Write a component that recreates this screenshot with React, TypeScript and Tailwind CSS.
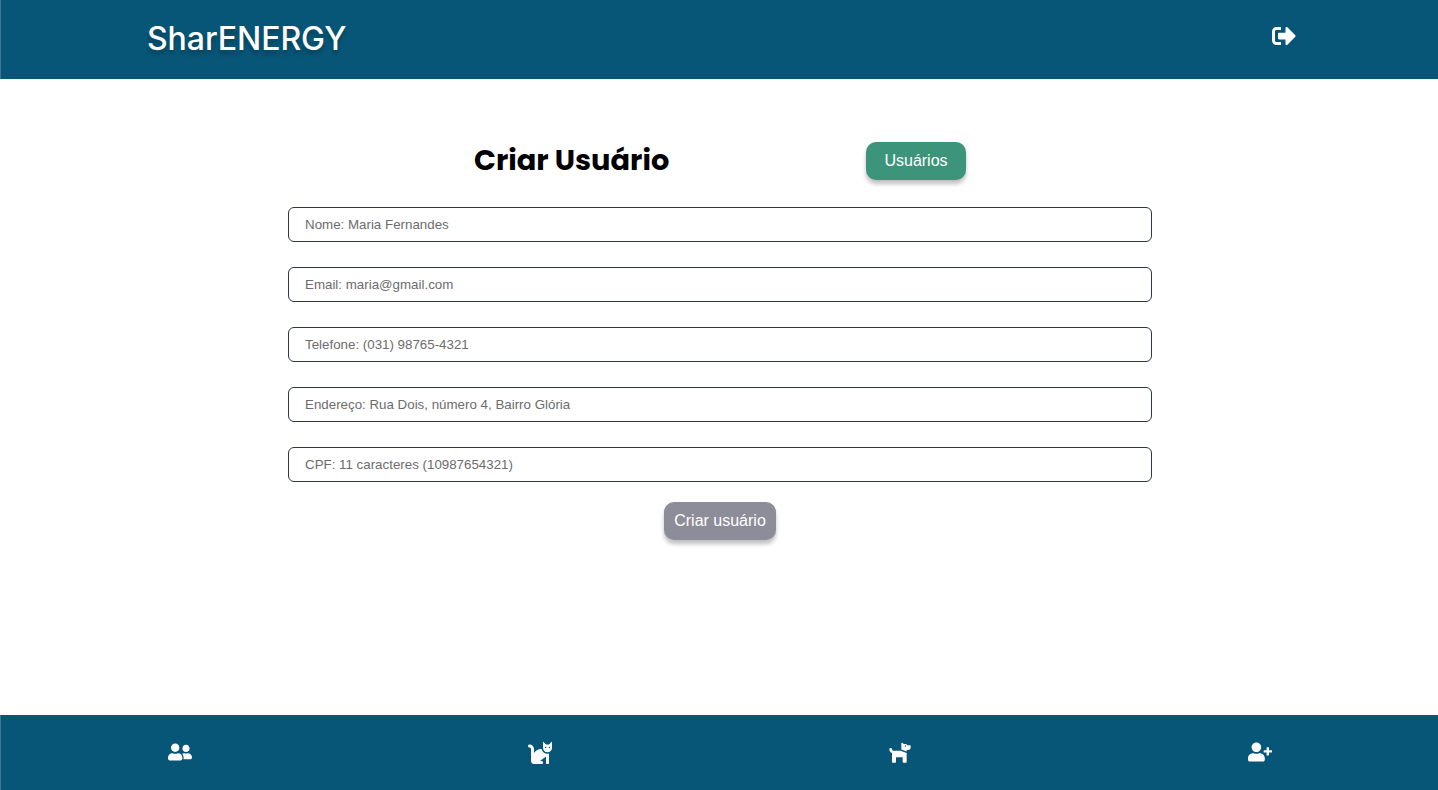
import { FaCat, FaDog, FaSignOutAlt, FaUserFriends, FaUserPlus } from "react-icons/fa";

const fields = [
  "Nome: Maria Fernandes",
  "Email: maria@gmail.com",
  "Telefone: (031) 98765-4321",
  "Endereço: Rua Dois, número 4, Bairro Glória",
  "CPF: 11 caracteres (10987654321)",
];

const links = [
  { label: "Usuários", Icon: FaUserFriends },
  { label: "Gatos", Icon: FaCat },
  { label: "Cachorros", Icon: FaDog },
  { label: "Criar usuário", Icon: FaUserPlus },
];

export default function App() {
  return (
    <div className="flex h-screen flex-col overflow-hidden bg-white font-['Liberation_Sans',Arial,sans-serif]">
      <header className="flex h-[79px] shrink-0 items-start justify-between border-l border-[#397893] bg-[#075678] pr-[142px] pl-[146px] text-white">
        <span className="mt-[15px] font-['Inter',sans-serif] text-[32px] leading-[48px] font-[450] tracking-[-0.05px] whitespace-nowrap [text-shadow:0_4px_4px_rgba(0,0,0,0.25)]">
          SharENERGY
        </span>
        <button aria-label="Sair" className="mt-6">
          <FaSignOutAlt size={24} />
        </button>
      </header>

      <main className="flex grow flex-col items-center pt-[63px]">
        <div className="flex h-[38px] w-[492px] translate-x-px items-start justify-between">
          <h1 className="-mt-[2px] font-['Poppins','Inter',sans-serif] text-[28.8px] leading-10 font-bold whitespace-nowrap text-black">
            Criar Usuário
          </h1>
          <button className="h-[38px] w-[100px] rounded-[10px] bg-[#3c957b] text-base text-white shadow-[0_4px_4px_rgba(0,0,0,0.25)]">
            Usuários
          </button>
        </div>
        <form className="mt-[27px] flex w-[864px] translate-x-px flex-col items-center">
          <div className="flex w-full flex-col gap-[25px]">
            {fields.map((placeholder) => (
              <input
                key={placeholder}
                placeholder={placeholder}
                className="h-[35px] w-full rounded-md border border-[#2d3748] bg-white px-4 text-[13.333px] placeholder:text-[#6c6c6c]"
              />
            ))}
          </div>
          <button
            type="button"
            className="mt-5 h-[38px] w-[112px] rounded-[10px] bg-[#8d8d99] text-base whitespace-nowrap text-white shadow-[0_4px_4px_rgba(0,0,0,0.25)]"
          >
            Criar usuário
          </button>
        </form>
      </main>

      <nav className="flex h-[75px] shrink-0 items-center justify-between border-l border-[#397893] bg-[#075678] pr-[166px] pb-[2px] pl-[167px] text-white">
        {links.map(({ label, Icon }) => (
          <button key={label} aria-label={label}>
            <Icon size={24} />
          </button>
        ))}
      </nav>
    </div>
  );
}
